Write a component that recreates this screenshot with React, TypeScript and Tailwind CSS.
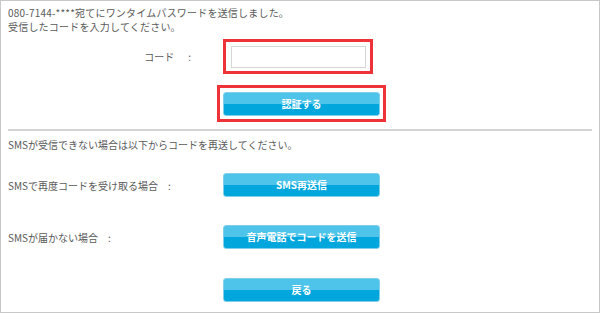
const font = { fontFamily: '"Noto Sans CJK JP", "Noto Sans", sans-serif' }

function BlueButton({ label }: { label: string }) {
  return (
    <button
      type="button"
      className="w-[157px] h-[24px] rounded-[3px] border border-[#7fcfea] bg-[linear-gradient(to_bottom,#4fc4ea_0%,#4fc4ea_48%,#00a6dc_52%,#00a6dc_100%)] text-white text-[10px] font-bold leading-none flex items-center justify-center"
    >
      {label}
    </button>
  )
}

function ResendRow({ label, button }: { label: string; button: string }) {
  return (
    <div className="flex items-center">
      <div className="w-[215px] flex text-[10px] text-[#5a5a5a]">
        <span>{label}</span>
        <span className="ml-[10px]">:</span>
      </div>
      <BlueButton label={button} />
    </div>
  )
}

export default function App() {
  return (
    <div style={font} className="w-[600px] h-[313px] bg-white border border-[#c8c8c8] box-border text-[#5a5a5a]">
      <div className="px-[7px] pt-[5px] text-[10px] leading-[14px] tracking-[0.2px]">
        <p>080-7144-****宛てにワンタイムパスワードを送信しました。</p>
        <p>受信したコードを入力してください。</p>
      </div>

      {/* code input */}
      <div className="flex items-center mt-[5px] px-[7px]">
        <div className="w-[215px] flex justify-end pr-[32px] text-[10px]">
          <span>コード</span>
          <span className="ml-[14px]">:</span>
        </div>
        <div className="border-[3px] border-[#ee3338] pl-[5px] pr-[4px] pt-[4px] pb-[3px]">
          <input
            type="text"
            className="block w-[135px] h-[22px] border border-[#d6d6d6] bg-white outline-none"
          />
        </div>
      </div>

      <div className="mt-[11px] ml-[216px] w-fit border-[3px] border-[#ee3338] px-[3px] pt-[4px] pb-[3px]">
        <BlueButton label="認証する" />
      </div>

      <div className="mt-[7px] mx-[7px] h-[2px] bg-[#d4d4d4]" />

      <div className="px-[7px]">
        <p className="mt-[7px] text-[10px] leading-[14px]">SMSが受信できない場合は以下からコードを再送してください。</p>
        <div className="mt-[21px]">
          <ResendRow label="SMSで再度コードを受け取る場合" button="SMS再送信" />
        </div>
        <div className="mt-[28px]">
          <ResendRow label="SMSが届かない場合" button="音声電話でコードを送信" />
        </div>
        <div className="mt-[29px] ml-[215px]">
          <BlueButton label="戻る" />
        </div>
      </div>
    </div>
  )
}
